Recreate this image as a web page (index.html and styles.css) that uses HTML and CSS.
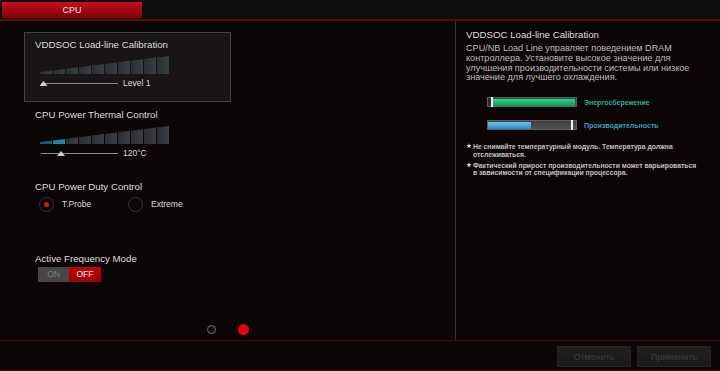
FILE: index.html
```html
<!DOCTYPE html>
<html lang="ru">
<head>
    <meta charset="UTF-8">
    <meta name="viewport" content="width=device-width, initial-scale=1.0">
    <title>CPU</title>
    <link rel="stylesheet" href="styles.css">
</head>
<body>
    <header class="topbar">
        <div class="tab">CPU</div>
    </header>

    <main class="main">
        <section class="left">
            <div class="settings">
                <div class="setting selected">
                    <div class="setting-title">VDDSOC Load-line Calibration</div>
                    <svg class="stairs" viewBox="0 0 129 18">
                        <defs>
                            <linearGradient id="steps1" x1="0" x2="1" y1="0" y2="0">
                                <stop offset="0" stop-color="#2a2e32"/>
                                <stop offset="1" stop-color="#3a3f43"/>
                            </linearGradient>
                        </defs>
                        <g fill="url(#steps1)">
                            <polygon points="0,18 0,16 12,14.5 12,18"/>
                            <polygon points="13,18 13,14.4 25,12.9 25,18"/>
                            <polygon points="26,18 26,12.8 38,11.3 38,18"/>
                            <polygon points="39,18 39,11.2 51,9.7 51,18"/>
                            <polygon points="52,18 52,9.5 64,8.1 64,18"/>
                            <polygon points="65,18 65,7.9 77,6.4 77,18"/>
                            <polygon points="78,18 78,6.3 90,4.8 90,18"/>
                            <polygon points="91,18 91,4.7 103,3.2 103,18"/>
                            <polygon points="104,18 104,3.1 116,1.6 116,18"/>
                            <polygon points="117,18 117,1.5 129,0 129,18"/>
                        </g>
                    </svg>
                    <div class="slider">
                        <svg viewBox="0 0 80 8">
                            <line x1="1" y1="4.5" x2="78" y2="4.5" stroke="#8a8a8a" stroke-width="1"/>
                            <polygon points="3.5,2 7.5,7 -0.5,7" fill="#d0d0d0"/>
                        </svg>
                        <span>Level 1</span>
                    </div>
                </div>

                <div class="setting">
                    <div class="setting-title">CPU Power Thermal Control</div>
                    <svg class="stairs" viewBox="0 0 129 18">
                        <defs>
                            <linearGradient id="steps2" x1="0" x2="1" y1="0" y2="0">
                                <stop offset="0" stop-color="#2a2e32"/>
                                <stop offset="1" stop-color="#3a3f43"/>
                            </linearGradient>
                        </defs>
                        <polygon points="0,18 0,16 12,14.5 12,18" fill="#136075"/>
                        <polygon points="13,18 13,14.4 25,12.9 25,18" fill="#1c87a2"/>
                        <g fill="url(#steps2)">
                            <polygon points="26,18 26,12.8 38,11.3 38,18"/>
                            <polygon points="39,18 39,11.2 51,9.7 51,18"/>
                            <polygon points="52,18 52,9.5 64,8.1 64,18"/>
                            <polygon points="65,18 65,7.9 77,6.4 77,18"/>
                            <polygon points="78,18 78,6.3 90,4.8 90,18"/>
                            <polygon points="91,18 91,4.7 103,3.2 103,18"/>
                            <polygon points="104,18 104,3.1 116,1.6 116,18"/>
                            <polygon points="117,18 117,1.5 129,0 129,18"/>
                        </g>
                    </svg>
                    <div class="slider">
                        <svg viewBox="0 0 80 8">
                            <line x1="1" y1="4.5" x2="78" y2="4.5" stroke="#8a8a8a" stroke-width="1"/>
                            <polygon points="21,2 25,7 17,7" fill="#d0d0d0"/>
                        </svg>
                        <span>120°C</span>
                    </div>
                </div>

                <div class="setting duty">
                    <div class="setting-title">CPU Power Duty Control</div>
                    <div class="radios">
                        <div class="option"><span class="radio on"></span>T.Probe</div>
                        <div class="option"><span class="radio"></span>Extreme</div>
                    </div>
                </div>

                <div class="setting freq">
                    <div class="setting-title">Active Frequency Mode</div>
                    <div class="toggle">
                        <span class="toggle-on">ON</span>
                        <span class="toggle-off">OFF</span>
                    </div>
                </div>
            </div>

            <div class="pager">
                <span class="dot"></span>
                <span class="dot active"></span>
            </div>
        </section>

        <section class="help">
            <div class="help-title">VDDSOC Load-line Calibration</div>
            <p class="help-text">CPU/NB Load Line управляет поведением DRAM<br>
                контроллера. Установите высокое значение для<br>
                улучшения производительности системы или низкое<br>
                значение для лучшего охлаждения.</p>

            <div class="meters">
                <div class="meter-row">
                    <div class="meter">
                        <span class="meter-dark"></span>
                        <span class="tick"></span>
                        <span class="fill-green"></span>
                    </div>
                    <span class="meter-label green">Энергосбережение</span>
                </div>
                <div class="meter-row">
                    <div class="meter">
                        <span class="fill-blue"></span>
                        <span class="meter-rest"></span>
                        <span class="tick"></span>
                        <span class="meter-end"></span>
                    </div>
                    <span class="meter-label blue">Производительность</span>
                </div>
            </div>

            <ul class="notes">
                <li>Не снимайте температурный модуль. Температура должна<br>отслеживаться.</li>
                <li>Фактический прирост производительности может варьироваться<br>в зависимости от спецификации процессора.</li>
            </ul>
        </section>
    </main>

    <footer class="footer">
        <button class="btn">Отменить</button>
        <button class="btn">Применить</button>
    </footer>
</body>
</html>
```

FILE: styles.css
```css
* {
    margin: 0;
    padding: 0;
    box-sizing: border-box;
}

body {
    width: 720px;
    height: 371px;
    overflow: hidden;
    background-color: #0d0607;
    font-family: "Liberation Sans", Arial, sans-serif;
    color: #d6d6d6;
}

/* top tab bar */
.topbar {
    height: 21px;
    padding: 2px;
    background-color: #0f0e0f;
    border-bottom: 2px solid #5c0a0c;
}

.tab {
    width: 140px;
    height: 16px;
    background: linear-gradient(#c8101c, #7c0008);
    color: #f2e6e6;
    font-size: 9px;
    line-height: 16px;
    text-align: center;
}

.main {
    display: flex;
    height: 319px;
}

/* left column with settings */
.left {
    width: 456px;
    border-right: 1px solid #363636;
    display: flex;
    flex-direction: column;
}

.settings {
    padding: 11px 0 0 24px;
}

.setting {
    width: 207px;
    border: 1px solid transparent;
    padding: 6px 10px 14px;
}

.setting.selected {
    border-color: #3a474b;
    background-color: #191415;
}

.setting-title {
    font-size: 9.7px;
    line-height: 12px;
    color: #dedede;
}

.stairs {
    display: block;
    width: 129px;
    height: 18px;
    margin: 5px 0 0 5px;
}

.slider {
    display: flex;
    align-items: center;
    height: 8px;
    margin: 5px 0 0 5px;
    font-size: 8.5px;
    color: #dadada;
}

.slider svg {
    width: 80px;
    height: 8px;
    margin-right: 3px;
}

.duty {
    margin-top: 2px;
}

.radios {
    display: flex;
    margin: 3px 0 0 4px;
}

.option {
    width: 89px;
    height: 16px;
    display: flex;
    align-items: center;
    gap: 8px;
    font-size: 8.5px;
    color: #dadada;
}

.radio {
    width: 15px;
    height: 15px;
    border-radius: 50%;
    border: 1px solid #353535;
    background-color: #080808;
    display: flex;
    align-items: center;
    justify-content: center;
}

.radio.on::after {
    content: "";
    width: 5px;
    height: 5px;
    border-radius: 50%;
    background-color: #e0101a;
}

.freq {
    margin-top: 19px;
}

.toggle {
    display: flex;
    height: 15px;
    margin: 2px 0 0 3px;
    font-size: 8.5px;
    line-height: 15px;
    text-align: center;
}

.toggle-on {
    width: 31px;
    background-color: #464646;
    color: #7c7c7c;
}

.toggle-off {
    width: 32px;
    background: linear-gradient(#c40008, #9a0006);
    color: #f4f4f4;
}

.pager {
    margin-top: auto;
    padding-bottom: 5px;
    display: flex;
    justify-content: center;
    align-items: center;
    gap: 22px;
}

.dot {
    width: 9px;
    height: 9px;
    border: 1.5px solid #7a7a7a;
    border-radius: 50%;
}

.dot.active {
    width: 11px;
    height: 11px;
    border: none;
    background-color: #e8000a;
}

/* right help column */
.help {
    flex: 1;
    padding: 8px 0 0 10px;
    white-space: nowrap;
}

.help-title {
    font-size: 9.7px;
    line-height: 12px;
    color: #dedede;
}

.help-text {
    margin-top: 3px;
    font-size: 9.1px;
    line-height: 9.8px;
    color: #bdbdbd;
}

.meters {
    margin-top: 14px;
    padding-left: 21px;
}

.meter-row {
    display: flex;
    align-items: center;
    gap: 7px;
    height: 10px;
}

.meter-row + .meter-row {
    margin-top: 13px;
}

.meter {
    width: 90px;
    height: 10px;
    padding: 0 1px;
    display: flex;
    align-items: center;
    background: linear-gradient(#3c3c3c, #555555);
    box-shadow: inset 0 0 0 1px #5e5e5e;
}

.meter-dark {
    width: 3px;
    height: 8px;
    background-color: #2a2a2a;
}

.tick {
    width: 2px;
    height: 10px;
    background-color: #f4f4f4;
}

.fill-green {
    width: 82px;
    height: 7px;
    background: linear-gradient(#2ad68c, #0c9a55);
}

.fill-blue {
    width: 43px;
    height: 7px;
    background: linear-gradient(#6cc6ee, #2a88c0);
}

.meter-rest {
    flex: 1;
}

.meter-end {
    width: 3px;
}

.meter-label {
    font-size: 7px;
    font-weight: bold;
}

.meter-label.green {
    color: #22b09a;
}

.meter-label.blue {
    color: #3a9fc4;
}

.notes {
    margin-top: 13px;
    list-style: none;
    font-size: 6.8px;
    font-weight: bold;
    line-height: 7.7px;
    color: #c0c0c0;
}

.notes li {
    display: flex;
}

.notes li + li {
    margin-top: 3px;
}

.notes li::before {
    content: "★";
    width: 7px;
    flex-shrink: 0;
    font-family: "DejaVu Sans", sans-serif;
    font-size: 6.5px;
    color: #e0e0e0;
}

/* bottom buttons */
.footer {
    height: 31px;
    padding: 5px 9px 0 0;
    display: flex;
    justify-content: flex-end;
    gap: 6px;
    border-top: 1px solid #4e0a0c;
    border-bottom: 1px solid #4e0a0c;
}

.btn {
    width: 74px;
    height: 21px;
    background: linear-gradient(#211f20, #1a191a);
    border: 1px solid #252525;
    color: #3e3e3e;
    font-family: "Liberation Sans", Arial, sans-serif;
    font-size: 9px;
}
```
